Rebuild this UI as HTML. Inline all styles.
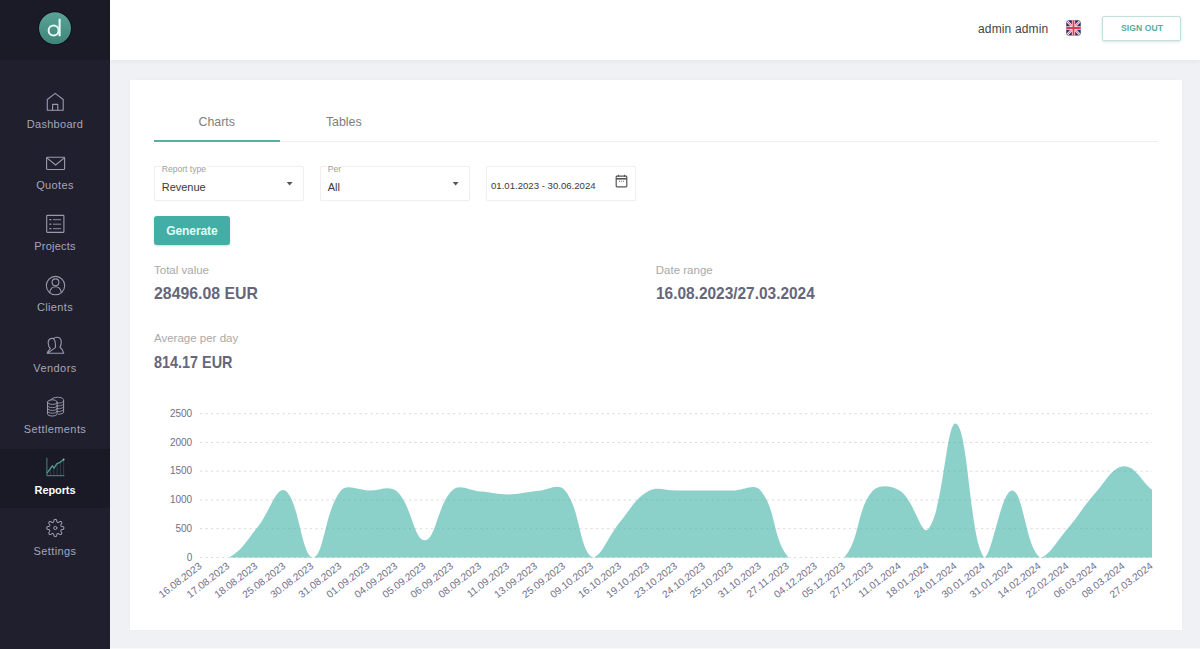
<!DOCTYPE html>
<html><head><meta charset="utf-8">
<style>
html,body{margin:0;padding:0;}
body{width:1200px;height:649px;overflow:hidden;position:relative;background:#f0f1f4;font-family:"Liberation Sans",sans-serif;}
.abs{position:absolute;}
.t{position:absolute;white-space:nowrap;line-height:1;}
#side{left:0;top:0;width:110px;height:649px;background:#1f1f2e;}
#logoarea{left:0;top:0;width:110px;height:60px;background:#1b1b27;}
#header{left:110px;top:0;width:1090px;height:60px;background:#fff;box-shadow:0 2px 5px rgba(0,0,0,0.045);}
#card{left:129.5px;top:80px;width:1052px;height:550px;background:#fff;box-shadow:0 0 2px rgba(0,0,0,0.035);}
.nav{color:#a6a6b8;font-size:11px;text-align:center;width:110px;left:0;}
.box{position:absolute;border:1px solid #efefef;box-shadow:0 0 1px rgba(0,0,0,0.06);border-radius:2px;box-sizing:border-box;background:#fff;}
.lbl{position:absolute;font-size:8.6px;color:#a0a0a0;background:#fff;padding:0 1px;line-height:1;white-space:nowrap;}
svg text{font-family:"Liberation Sans",sans-serif;}
</style></head>
<body>
<div id="side" class="abs"></div>
<div id="logoarea" class="abs"></div>
<div id="header" class="abs"></div>

<!-- logo -->
<svg class="abs" style="left:0;top:0" width="110" height="60" viewBox="0 0 110 60">
  <defs><linearGradient id="lg" x1="0" y1="0" x2="0" y2="1"><stop offset="0" stop-color="#5aa397"/><stop offset="1" stop-color="#3f8479"/></linearGradient></defs>
  <circle cx="55" cy="28.3" r="17" fill="#101018"/><circle cx="55" cy="28.3" r="16" fill="url(#lg)"/>
  <circle cx="53.6" cy="30.5" r="5" fill="none" stroke="#e6faf6" stroke-width="2"/>
  <line x1="59.6" y1="18.8" x2="59.6" y2="36.2" stroke="#eafaf6" stroke-width="2.1"/>
</svg>

<!-- active nav bg -->
<div class="abs" style="left:0;top:449px;width:110px;height:59px;background:#1a1a26;"></div>

<!-- nav icons -->
<svg class="abs" style="left:0;top:0" width="110" height="649" viewBox="0 0 110 649" fill="none" stroke="#9a9aae" stroke-width="1.1" stroke-linejoin="round" stroke-linecap="round">
  <!-- house -->
  <path d="M47.3 110.2 V99.5 L55.2 93.4 L63.2 99.5 V110.2 Z"/>
  <path d="M52.6 110.2 V104.4 H57.8 V110.2"/>
  <!-- envelope -->
  <rect x="46.6" y="157.3" width="18" height="12.2" rx="0.8"/>
  <path d="M46.9 157.8 L55.6 165 L64.3 157.8"/>
  <!-- projects -->
  <rect x="46.7" y="215.4" width="17.2" height="17" rx="0.6"/>
  <path d="M53.4 219.7 H60.6 M53.4 224.2 H60.6 M53.4 228.7 H60.6" stroke-width="0.9"/>
  <path d="M49.9 219.7 h1 M49.9 224.2 h1 M49.9 228.7 h1" stroke-width="1.3"/>
  <!-- clients -->
  <circle cx="55.5" cy="285.6" r="9.2"/>
  <circle cx="55.5" cy="282.3" r="3.4"/>
  <path d="M49.6 292.6 C50.5 288.3 52.5 286.8 55.5 286.8 C58.5 286.8 60.5 288.3 61.4 292.6"/>
  <!-- vendors -->
  <path d="M47.2 353.3 H63.8 M63.8 353.3 C63.2 350.5 61.8 348.5 59.9 347 C61.2 345.6 61.4 343.2 61.2 341 C60.9 338.6 59 337.2 56.9 337.2 C55.5 337.2 54.3 337.8 53.6 338.6 M47.2 353.3 C48 351 49.3 349.6 50.4 348.6 C49 347.4 48.3 345.5 48.2 343 C48.1 340.4 49.8 338.6 52 338.4 C52.6 338.35 53.1 338.45 53.6 338.6 C55 340.5 55.8 344.5 55.3 347.6 L48.4 352.6"/>
  <!-- settlements (coin stack) -->
  <path d="M47.5 402.2 C47.5 400.8 49.6 399.8 52.3 399.8 C55 399.8 57.1 400.8 57.1 402.2 C57.1 403.5 55 404.4 52.3 404.4 C49.6 404.4 47.5 403.5 47.5 402.2 Z" stroke-width="1"/>
  <path d="M47.5 402.2 V413.8 C47.5 415.1 49.6 416 52.3 416 C55 416 57.1 415.1 57.1 413.8 V402.2" stroke-width="1"/>
  <path d="M47.5 405.5 C47.5 406.8 49.6 407.6 52.3 407.6 C55 407.6 57.1 406.8 57.1 405.5 M47.5 408.3 C47.5 409.6 49.6 410.4 52.3 410.4 C55 410.4 57.1 409.6 57.1 408.3 M47.5 411.1 C47.5 412.4 49.6 413.2 52.3 413.2 C55 413.2 57.1 412.4 57.1 411.1" stroke-width="0.9"/>
  <path d="M50.2 400.3 C51.5 398.3 54.5 397.3 57.5 397.3 C61 397.3 63.6 398.4 63.6 399.8 V412.2 C63.6 413.2 61.5 414 58.6 414.2" stroke-width="1"/>
  <path d="M57.1 403.2 C60.5 403.2 63.6 402.4 63.6 401 M57.1 406 C60.5 406 63.6 405.2 63.6 403.8 M57.1 408.8 C60.5 408.8 63.6 408 63.6 406.6 M57.1 411.6 C60.5 411.6 63.6 410.8 63.6 409.4" stroke-width="0.9"/>
  <!-- gear -->
  <path d="M55.30 519.35 L55.64 519.40 L55.97 519.53 L56.27 519.76 L56.55 520.11 L56.73 520.79 L56.87 521.48 L57.04 521.84 L57.22 522.10 L57.41 522.29 L57.62 522.41 L57.85 522.47 L58.12 522.47 L58.43 522.41 L58.80 522.28 L59.38 521.89 L60.00 521.53 L60.44 521.49 L60.82 521.54 L61.15 521.68 L61.42 521.88 L61.62 522.15 L61.76 522.48 L61.81 522.86 L61.77 523.30 L61.41 523.92 L61.02 524.50 L60.89 524.87 L60.83 525.18 L60.83 525.45 L60.89 525.68 L61.01 525.89 L61.20 526.08 L61.46 526.26 L61.82 526.43 L62.51 526.57 L63.19 526.75 L63.54 527.03 L63.77 527.33 L63.90 527.66 L63.95 528.00 L63.90 528.34 L63.77 528.67 L63.54 528.97 L63.19 529.25 L62.51 529.43 L61.82 529.57 L61.46 529.74 L61.20 529.92 L61.01 530.11 L60.89 530.32 L60.83 530.55 L60.83 530.82 L60.89 531.13 L61.02 531.50 L61.41 532.08 L61.77 532.70 L61.81 533.14 L61.76 533.52 L61.62 533.85 L61.42 534.12 L61.15 534.32 L60.82 534.46 L60.44 534.51 L60.00 534.47 L59.38 534.11 L58.80 533.72 L58.43 533.59 L58.12 533.53 L57.85 533.53 L57.62 533.59 L57.41 533.71 L57.22 533.90 L57.04 534.16 L56.87 534.52 L56.73 535.21 L56.55 535.89 L56.27 536.24 L55.97 536.47 L55.64 536.60 L55.30 536.65 L54.96 536.60 L54.63 536.47 L54.33 536.24 L54.05 535.89 L53.87 535.21 L53.73 534.52 L53.56 534.16 L53.38 533.90 L53.19 533.71 L52.98 533.59 L52.75 533.53 L52.48 533.53 L52.17 533.59 L51.80 533.72 L51.22 534.11 L50.60 534.47 L50.16 534.51 L49.78 534.46 L49.45 534.32 L49.18 534.12 L48.98 533.85 L48.84 533.52 L48.79 533.14 L48.83 532.70 L49.19 532.08 L49.58 531.50 L49.71 531.13 L49.77 530.82 L49.77 530.55 L49.71 530.32 L49.59 530.11 L49.40 529.92 L49.14 529.74 L48.78 529.57 L48.09 529.43 L47.41 529.25 L47.06 528.97 L46.83 528.67 L46.70 528.34 L46.65 528.00 L46.70 527.66 L46.83 527.33 L47.06 527.03 L47.41 526.75 L48.09 526.57 L48.78 526.43 L49.14 526.26 L49.40 526.08 L49.59 525.89 L49.71 525.68 L49.77 525.45 L49.77 525.18 L49.71 524.87 L49.58 524.50 L49.19 523.92 L48.83 523.30 L48.79 522.86 L48.84 522.48 L48.98 522.15 L49.18 521.88 L49.45 521.68 L49.78 521.54 L50.16 521.49 L50.60 521.53 L51.22 521.89 L51.80 522.28 L52.17 522.41 L52.48 522.47 L52.75 522.47 L52.98 522.41 L53.19 522.29 L53.38 522.10 L53.56 521.84 L53.73 521.48 L53.87 520.79 L54.05 520.11 L54.33 519.76 L54.63 519.53 L54.96 519.40 Z" stroke-width="1.05"/>
  <circle cx="55.3" cy="528" r="1.6" stroke-width="1"/>
</svg>
<!-- reports icon (teal) -->
<svg class="abs" style="left:0;top:0" width="110" height="649" viewBox="0 0 110 649" fill="none" stroke="#3f8b84" stroke-width="1.1" stroke-linecap="round" stroke-linejoin="round">
  <path d="M46.9 458 V475.6 H64" stroke="#3a7d77"/>
  <path d="M50.6 475 V467.5 M53.9 475 V469 M57.1 475 V464.5 M60.4 475 V462.8 M63.6 475 V460.5" stroke-width="0.9" opacity="0.4"/>
  <path d="M47.4 472.7 L52.5 465.7 L53.9 468.3 L56.7 463.9 L59.9 462.4 L63.6 459.5" stroke-width="1.3" stroke="#4f9e96"/><circle cx="63.6" cy="459.5" r="0.9" fill="#7fc1ba" stroke="none"/>
</svg>
<div class="t nav" style="top:119px;letter-spacing:0.3px;">Dashboard</div>
<div class="t nav" style="top:180px;letter-spacing:0.35px;">Quotes</div>
<div class="t nav" style="top:241px;letter-spacing:0.25px;">Projects</div>
<div class="t nav" style="top:302px;letter-spacing:0.35px;">Clients</div>
<div class="t nav" style="top:363px;letter-spacing:0.45px;">Vendors</div>
<div class="t nav" style="top:424px;letter-spacing:0.4px;">Settlements</div>
<div class="t nav" style="top:485px;color:#fff;font-weight:bold;letter-spacing:-0.1px;">Reports</div>
<div class="t nav" style="top:546px;letter-spacing:0.4px;">Settings</div>

<!-- header right -->
<div class="t" style="left:978px;top:22.5px;font-size:12px;color:#444;letter-spacing:0.15px;">admin admin</div>
<svg class="abs" style="left:1066px;top:20px" width="15" height="16" viewBox="0 0 15 16">
  <defs><clipPath id="fc"><rect x="0.3" y="0.3" width="14.4" height="15.2" rx="2.6"/></clipPath></defs>
  <g clip-path="url(#fc)">
    <rect width="15" height="16" fill="#2b2866"/>
    <path d="M0 0 L15 16 M15 0 L0 16" stroke="#f3eef2" stroke-width="2.4"/>
    <path d="M0 0 L15 16 M15 0 L0 16" stroke="#d8445a" stroke-width="0.9"/>
    <path d="M7.5 0 V16 M0 8 H15" stroke="#f5e9ee" stroke-width="3.4"/>
    <path d="M7.5 0 V16 M0 8 H15" stroke="#e0394d" stroke-width="1.8"/>
  </g>
</svg>
<div class="abs" style="left:1102px;top:16px;width:79px;height:25px;box-sizing:border-box;border:1px solid #bfe1dc;border-radius:2px;background:#fff;box-shadow:0 1px 3px rgba(0,0,0,0.12);"></div>
<div class="t" style="left:1121px;top:23.5px;font-size:8.6px;font-weight:bold;color:#5aaba2;letter-spacing:0.05px;">SIGN OUT</div>

<div id="card" class="abs"></div>

<!-- tabs -->
<div class="t" style="left:198.5px;top:115.5px;font-size:12.4px;color:#808080;">Charts</div>
<div class="t" style="left:325.9px;top:115.5px;font-size:12.4px;color:#808080;">Tables</div>
<div class="abs" style="left:154px;top:141px;width:1004px;height:1px;background:#efefef;"></div>
<div class="abs" style="left:154px;top:140px;width:126px;height:2px;background:#55b1a7;"></div>

<!-- form fields -->
<div class="box" style="left:154px;top:166px;width:150px;height:35px;"></div>
<div class="lbl" style="left:160.7px;top:164.6px;">Report type</div>
<div class="t" style="left:161.7px;top:182px;font-size:11px;color:#3a3a3a;">Revenue</div>
<svg class="abs" style="left:286px;top:181px" width="8" height="5"><path d="M0.7 1 H6.6 L3.65 4.4 Z" fill="#555"/></svg>

<div class="box" style="left:320px;top:166px;width:150px;height:35px;"></div>
<div class="lbl" style="left:326.7px;top:164.6px;">Per</div>
<div class="t" style="left:327.7px;top:182px;font-size:11px;color:#3a3a3a;">All</div>
<svg class="abs" style="left:452px;top:181px" width="8" height="5"><path d="M0.7 1 H6.6 L3.65 4.4 Z" fill="#555"/></svg>

<div class="box" style="left:486px;top:166px;width:150px;height:35px;"></div>
<div class="t" style="left:491px;top:181px;font-size:9.6px;color:#3a3a3a;">01.01.2023 - 30.06.2024</div>
<svg class="abs" style="left:615px;top:174px" width="13" height="14" viewBox="0 0 13 14" fill="none" stroke="#555">
  <rect x="1.2" y="2.2" width="10.6" height="10.6" rx="0.8" stroke-width="1.2"/>
  <path d="M1.2 4.8 H11.8" stroke-width="1.6"/>
  <path d="M3.5 0.8 V3 M9.5 0.8 V3" stroke-width="1.1"/>
  <path d="M4 7.3 h1 M6 7.3 h1 M8 7.3 h1" stroke-width="0.8"/>
</svg>

<!-- generate -->
<div class="abs" style="left:154px;top:216px;width:76px;height:29px;background:#42aea6;border-radius:3px;box-shadow:0 1px 2px rgba(0,0,0,0.15);"></div>
<div class="t" style="left:166.3px;top:224.7px;font-size:12px;font-weight:bold;color:#e2fcf8;letter-spacing:-0.1px;">Generate</div>

<!-- stats -->
<div class="t" style="left:154px;top:265px;font-size:11.5px;color:#a9a9a9;">Total value</div>
<div class="t" style="left:154px;top:285.4px;font-size:16.3px;font-weight:bold;color:#66667a;transform-origin:0 0;transform:scaleX(0.974);">28496.08 EUR</div>
<div class="t" style="left:655.8px;top:265px;font-size:11.5px;color:#a9a9a9;">Date range</div>
<div class="t" style="left:655.8px;top:285.4px;font-size:16.3px;font-weight:bold;color:#66667a;transform-origin:0 0;transform:scaleX(0.948);">16.08.2023/27.03.2024</div>
<div class="t" style="left:154px;top:333px;font-size:11.5px;color:#a9a9a9;">Average per day</div>
<div class="t" style="left:154px;top:353.6px;font-size:16.3px;font-weight:bold;color:#66667a;transform-origin:0 0;transform:scaleX(0.885);">814.17 EUR</div>

<!-- chart -->
<svg class="abs" style="left:0;top:0" width="1200" height="649" viewBox="0 0 1200 649">
  <line x1="200" y1="557.45" x2="1152" y2="557.45" stroke="#d9d9d9" stroke-width="1" stroke-dasharray="2.2 3.3"/><line x1="200" y1="528.70" x2="1152" y2="528.70" stroke="#d9d9d9" stroke-width="1" stroke-dasharray="2.2 3.3"/><line x1="200" y1="499.95" x2="1152" y2="499.95" stroke="#d9d9d9" stroke-width="1" stroke-dasharray="2.2 3.3"/><line x1="200" y1="471.20" x2="1152" y2="471.20" stroke="#d9d9d9" stroke-width="1" stroke-dasharray="2.2 3.3"/><line x1="200" y1="442.45" x2="1152" y2="442.45" stroke="#d9d9d9" stroke-width="1" stroke-dasharray="2.2 3.3"/><line x1="200" y1="413.70" x2="1152" y2="413.70" stroke="#d9d9d9" stroke-width="1" stroke-dasharray="2.2 3.3"/>
  <path d="M201.00,557.45 C212.19,557.45 219.83,557.45 228.97,557.45 C242.21,550.51 246.57,540.54 256.94,528.12 C268.95,513.75 276.13,485.86 284.91,490.46 C298.50,497.59 301.67,557.39 312.88,557.45 C324.05,557.45 324.72,510.07 340.85,490.75 C347.09,483.28 357.64,490.35 368.82,490.46 C380.01,490.58 389.37,484.72 396.79,491.33 C411.74,504.62 413.69,540.46 424.76,540.20 C436.07,539.93 437.69,503.07 452.74,490.00 C460.07,483.63 469.54,490.73 480.71,491.61 C491.91,492.50 497.50,494.54 508.68,494.43 C519.88,494.31 525.42,491.95 536.65,491.04 C547.80,490.13 558.42,482.53 564.62,489.89 C580.80,509.10 578.83,549.74 592.59,557.45 C601.20,557.45 608.78,535.21 620.56,521.23 C631.15,508.65 635.21,498.34 648.53,491.04 C657.58,486.08 665.31,490.67 676.50,490.58 C687.69,490.49 693.28,490.58 704.47,490.58 C715.66,490.58 721.25,490.66 732.44,490.58 C743.63,490.50 754.20,482.75 760.41,490.18 C776.58,509.50 772.21,538.01 788.38,557.45 C794.59,557.45 805.16,557.45 816.35,557.45 C827.54,557.45 838.05,557.45 844.32,557.45 C860.43,538.42 856.19,510.44 872.29,491.33 C878.57,483.88 891.94,485.42 900.26,491.04 C914.31,500.51 921.47,537.18 928.24,529.05 C943.85,510.27 946.28,418.72 956.21,423.76 C968.65,430.08 969.56,539.99 984.18,557.45 C991.93,557.45 1000.96,490.58 1012.15,490.58 C1023.34,490.58 1025.78,547.85 1040.12,557.45 C1048.15,557.45 1057.55,540.34 1068.09,528.01 C1079.92,514.17 1083.86,505.49 1096.06,492.02 C1106.24,480.76 1112.61,466.67 1124.03,466.20 C1134.99,465.75 1140.81,480.31 1152.00,489.72 L1152.00,557.45 L201.00,557.45 Z" fill="rgba(64,176,166,0.6)"/>
  <g font-size="10" fill="#6f6f86"><text x="192.2" y="560.55" text-anchor="end">0</text><text x="192.2" y="531.80" text-anchor="end">500</text><text x="192.2" y="503.05" text-anchor="end">1000</text><text x="192.2" y="474.30" text-anchor="end">1500</text><text x="192.2" y="445.55" text-anchor="end">2000</text><text x="192.2" y="416.80" text-anchor="end">2500</text></g>
  <g font-size="10.2" fill="#6f6f8a"><text x="202.40" y="567.40" text-anchor="end" transform="rotate(-37.5 202.40 567.40)">16.08.2023</text><text x="230.37" y="567.40" text-anchor="end" transform="rotate(-37.5 230.37 567.40)">17.08.2023</text><text x="258.34" y="567.40" text-anchor="end" transform="rotate(-37.5 258.34 567.40)">18.08.2023</text><text x="286.31" y="567.40" text-anchor="end" transform="rotate(-37.5 286.31 567.40)">25.08.2023</text><text x="314.28" y="567.40" text-anchor="end" transform="rotate(-37.5 314.28 567.40)">30.08.2023</text><text x="342.25" y="567.40" text-anchor="end" transform="rotate(-37.5 342.25 567.40)">31.08.2023</text><text x="370.22" y="567.40" text-anchor="end" transform="rotate(-37.5 370.22 567.40)">01.09.2023</text><text x="398.19" y="567.40" text-anchor="end" transform="rotate(-37.5 398.19 567.40)">04.09.2023</text><text x="426.16" y="567.40" text-anchor="end" transform="rotate(-37.5 426.16 567.40)">05.09.2023</text><text x="454.14" y="567.40" text-anchor="end" transform="rotate(-37.5 454.14 567.40)">06.09.2023</text><text x="482.11" y="567.40" text-anchor="end" transform="rotate(-37.5 482.11 567.40)">08.09.2023</text><text x="510.08" y="567.40" text-anchor="end" transform="rotate(-37.5 510.08 567.40)">11.09.2023</text><text x="538.05" y="567.40" text-anchor="end" transform="rotate(-37.5 538.05 567.40)">13.09.2023</text><text x="566.02" y="567.40" text-anchor="end" transform="rotate(-37.5 566.02 567.40)">25.09.2023</text><text x="593.99" y="567.40" text-anchor="end" transform="rotate(-37.5 593.99 567.40)">09.10.2023</text><text x="621.96" y="567.40" text-anchor="end" transform="rotate(-37.5 621.96 567.40)">16.10.2023</text><text x="649.93" y="567.40" text-anchor="end" transform="rotate(-37.5 649.93 567.40)">19.10.2023</text><text x="677.90" y="567.40" text-anchor="end" transform="rotate(-37.5 677.90 567.40)">23.10.2023</text><text x="705.87" y="567.40" text-anchor="end" transform="rotate(-37.5 705.87 567.40)">24.10.2023</text><text x="733.84" y="567.40" text-anchor="end" transform="rotate(-37.5 733.84 567.40)">25.10.2023</text><text x="761.81" y="567.40" text-anchor="end" transform="rotate(-37.5 761.81 567.40)">31.10.2023</text><text x="789.78" y="567.40" text-anchor="end" transform="rotate(-37.5 789.78 567.40)">27.11.2023</text><text x="817.75" y="567.40" text-anchor="end" transform="rotate(-37.5 817.75 567.40)">04.12.2023</text><text x="845.72" y="567.40" text-anchor="end" transform="rotate(-37.5 845.72 567.40)">05.12.2023</text><text x="873.69" y="567.40" text-anchor="end" transform="rotate(-37.5 873.69 567.40)">27.12.2023</text><text x="901.66" y="567.40" text-anchor="end" transform="rotate(-37.5 901.66 567.40)">11.01.2024</text><text x="929.64" y="567.40" text-anchor="end" transform="rotate(-37.5 929.64 567.40)">18.01.2024</text><text x="957.61" y="567.40" text-anchor="end" transform="rotate(-37.5 957.61 567.40)">24.01.2024</text><text x="985.58" y="567.40" text-anchor="end" transform="rotate(-37.5 985.58 567.40)">30.01.2024</text><text x="1013.55" y="567.40" text-anchor="end" transform="rotate(-37.5 1013.55 567.40)">31.01.2024</text><text x="1041.52" y="567.40" text-anchor="end" transform="rotate(-37.5 1041.52 567.40)">14.02.2024</text><text x="1069.49" y="567.40" text-anchor="end" transform="rotate(-37.5 1069.49 567.40)">22.02.2024</text><text x="1097.46" y="567.40" text-anchor="end" transform="rotate(-37.5 1097.46 567.40)">06.03.2024</text><text x="1125.43" y="567.40" text-anchor="end" transform="rotate(-37.5 1125.43 567.40)">08.03.2024</text><text x="1153.40" y="567.40" text-anchor="end" transform="rotate(-37.5 1153.40 567.40)">27.03.2024</text></g>
</svg>
<div class="abs" style="left:110px;top:648px;width:1090px;height:1px;background:#f8f9fa;"></div>
</body></html>
